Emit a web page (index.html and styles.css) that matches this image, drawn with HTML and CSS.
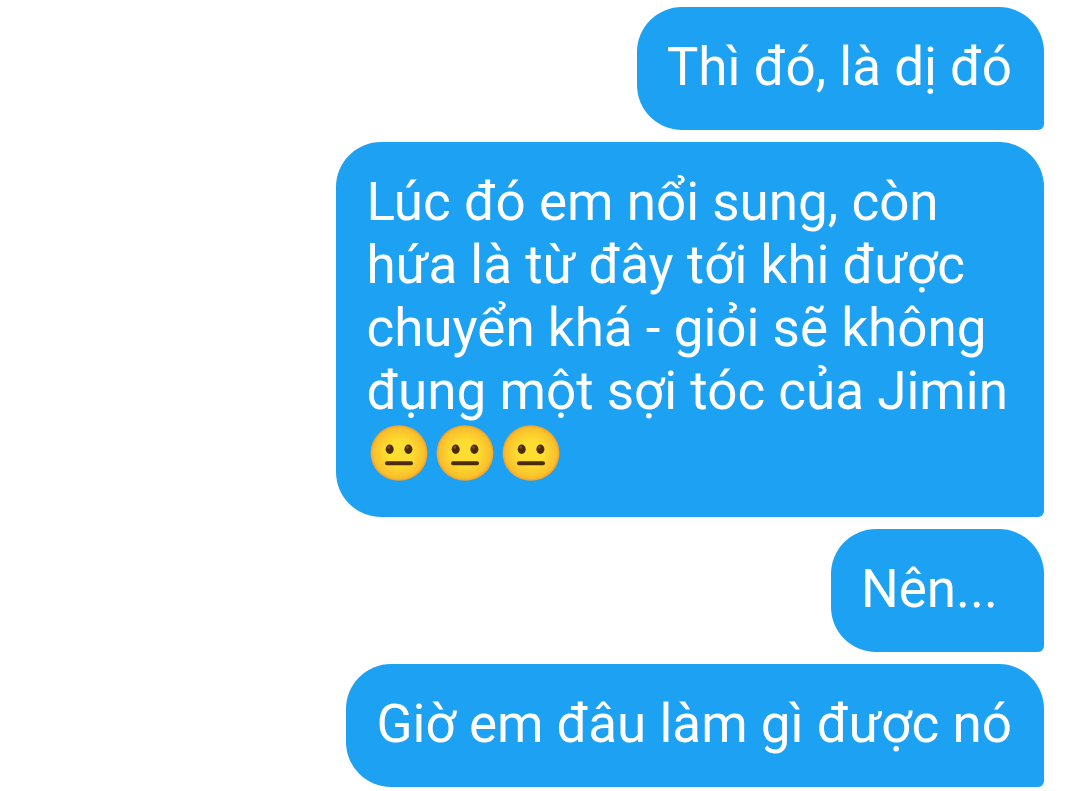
FILE: index.html
```html
<!DOCTYPE html>
<html lang="vi">
<head>
    <meta charset="UTF-8">
    <title>Tin nhắn</title>
    <link rel="stylesheet" href="styles.css">
</head>
<body>
    <svg class="defs" width="0" height="0" aria-hidden="true">
        <defs>
            <radialGradient id="face-fill" cx="50%" cy="50%" r="50%">
                <stop offset="45%" stop-color="#fddd2f"/>
                <stop offset="90%" stop-color="#f9bf2c"/>
                <stop offset="100%" stop-color="#ee9f2b"/>
            </radialGradient>
            <symbol id="neutral-face" viewBox="0 0 60 60">
                <ellipse cx="30" cy="30" rx="28.5" ry="27.8" fill="url(#face-fill)"/>
                <ellipse cx="20.7" cy="26.2" rx="4" ry="4.7" fill="#4b2b0b"/>
                <ellipse cx="39.4" cy="26.2" rx="4" ry="4.7" fill="#4b2b0b"/>
                <circle cx="19.8" cy="24.4" r="1.3" fill="#7a5224"/>
                <circle cx="38.5" cy="24.4" r="1.3" fill="#7a5224"/>
                <path d="M18 40.2H42" stroke="#4b2b0b" stroke-width="4" stroke-linecap="round"/>
            </symbol>
        </defs>
    </svg>
    <main class="chat">
        <p class="bubble">Thì đó, là dị đó</p>
        <p class="bubble long">Lúc đó em nổi sung, còn<br>hứa là từ đây tới khi được<br>chuyển khá - giỏi sẽ không<br>đụng một sợi tóc của Jimin<br><span class="emojis"><svg class="emoji" role="img" aria-label="😐"><use href="#neutral-face"/></svg><svg class="emoji" role="img" aria-label="😐"><use href="#neutral-face"/></svg><svg class="emoji" role="img" aria-label="😐"><use href="#neutral-face"/></svg></span></p>
        <p class="bubble short">Nên...</p>
        <p class="bubble">Giờ em đâu làm gì được nó</p>
    </main>
</body>
</html>
```
FILE: styles.css
```css
body {
    margin: 0;
    background-color: #ffffff;
    font-family: Roboto, sans-serif;
}

.defs {
    display: block;
}

.chat {
    display: flex;
    flex-direction: column;
    align-items: flex-end;
    gap: 12px;
    padding: 7px 36px 4px;
}

.bubble {
    margin: 0;
    padding: 29px 32px 31px 30px;
    border-radius: 45px 45px 6px 45px;
    background-color: #1da1f2;
    color: #ffffff;
    font-size: 53px;
    line-height: 63px;
}

.long {
    padding-right: 36px;
}

.short {
    padding-right: 46px;
}

.emojis {
    display: flex;
    gap: 6px;
    height: 63px;
    align-items: flex-start;
    padding-left: 3px;
}

.emoji {
    width: 60px;
    height: 60px;
}
```
